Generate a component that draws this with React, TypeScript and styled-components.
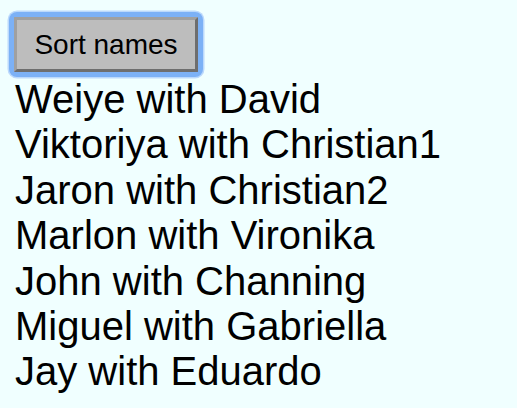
import React, { useState } from "react";
import styled, { createGlobalStyle } from "styled-components";

const GlobalStyle = createGlobalStyle`
  html, body {
    margin: 0;
    padding: 0;
    background: #f0ffff;
  }
  body {
    font-family: "Liberation Sans", Arial, Helvetica, sans-serif;
    color: #000;
  }
`;

const Page = styled.div`
  display: flex;
  flex-direction: column;
  align-items: flex-start;
  padding: 12px 0 0 9px;
  min-height: 408px;
  box-sizing: border-box;
`;

const FocusRing = styled.div`
  display: flex;
  padding: 5px;
  border-radius: 8px;
  background: #7cb1f6;
  box-shadow: 0 0 0 1.5px #bcd9fc;
`;

const SortButton = styled.button`
  font-family: "Liberation Sans", Arial, Helvetica, sans-serif;
  font-size: 28px;
  width: 184px;
  height: 55px;
  padding: 0;
  background: #bdbdbd;
  color: #000;
  border: 3px solid;
  border-color: #a0a0a0 #6e6e6e #6e6e6e #a0a0a0;
  border-radius: 1px;
  outline: none;
  cursor: pointer;
`;

const List = styled.div`
  margin-top: 0px;
  padding-left: 6px;
`;

const Pair = styled.div`
  font-size: 40px;
  line-height: 45.4px;
  white-space: nowrap;
`;

const initial = [
  ["Weiye", "David"],
  ["Viktoriya", "Christian1"],
  ["Jaron", "Christian2"],
  ["Marlon", "Vironika"],
  ["John", "Channing"],
  ["Miguel", "Gabriella"],
  ["Jay", "Eduardo"],
];

export default function App() {
  const [pairs, setPairs] = useState(initial);
  return (
    <>
      <GlobalStyle />
      <Page>
        <FocusRing>
          <SortButton
            onClick={() =>
              setPairs([...pairs].sort((a, b) => a[0].localeCompare(b[0])))
            }
          >
            Sort names
          </SortButton>
        </FocusRing>
        <List>
          {pairs.map(([a, b]) => (
            <Pair key={a}>
              {a} with {b}
            </Pair>
          ))}
        </List>
      </Page>
    </>
  );
}
